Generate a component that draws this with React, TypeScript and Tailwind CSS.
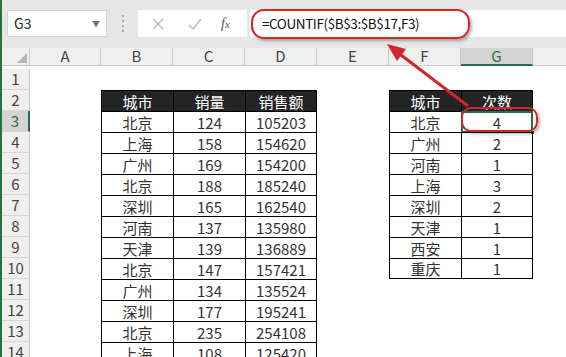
import React from 'react';

const COLS = ['A', 'B', 'C', 'D', 'E', 'F', 'G', 'H'];

const sales: [string, number, number][] = [
  ['北京', 124, 105203],
  ['上海', 158, 154620],
  ['广州', 169, 154200],
  ['北京', 188, 185240],
  ['深圳', 165, 162540],
  ['河南', 137, 135980],
  ['天津', 139, 136889],
  ['北京', 147, 157421],
  ['广州', 134, 135524],
  ['深圳', 177, 195241],
  ['北京', 235, 254108],
  ['上海', 108, 125420],
];

const counts: [string, number][] = [
  ['北京', 4],
  ['广州', 2],
  ['河南', 1],
  ['上海', 3],
  ['深圳', 2],
  ['天津', 1],
  ['西安', 1],
  ['重庆', 1],
];

function cellContent(row: number, col: number): { text: string; head?: boolean; border?: string } | null {
  // table 1: B2:D14
  if (col >= 1 && col <= 3 && row >= 2) {
    let border = 'border-l border-t border-black';
    if (col === 3) border += ' border-r';
    if (row === 2) {
      return { text: ['城市', '销量', '销售额'][col - 1], head: true, border };
    }
    const d = sales[row - 3];
    return { text: d ? String(d[col - 1]) : '', border };
  }
  // table 2: F2:G10
  if (col >= 5 && col <= 6 && row >= 2 && row <= 10) {
    let border = 'border-l border-t border-black';
    if (col === 6) border += ' border-r';
    if (row === 10) border += ' border-b';
    if (row === 2) return { text: col === 5 ? '城市' : '次数', head: true, border };
    const d = counts[row - 3];
    return { text: String(d[col - 5]), border };
  }
  return null;
}

export default function App() {
  const rows = Array.from({ length: 14 }, (_, i) => i + 1);

  return (
    <div className="relative w-[566px] h-[357px] overflow-hidden bg-white border-l-2 border-[#217346] font-['Noto_Sans_CJK_SC',sans-serif]">
      {/* formula bar */}
      <div className="h-[48px] bg-[#e6e6e6] flex items-start pt-[10px] pl-[5px]">
        <div className="w-[100px] h-[27px] bg-white border border-[#d6d6d6] flex items-center justify-between pl-[6px] pr-[6px]">
          <span className="text-[14px] text-[#222]">G3</span>
          <span className="text-[8px] text-[#777]">▼</span>
        </div>
        <div className="w-[31px] h-[27px] flex flex-col items-center justify-center gap-[3px]">
          <span className="w-[2px] h-[2px] bg-[#a8a8a8]" />
          <span className="w-[2px] h-[2px] bg-[#a8a8a8]" />
          <span className="w-[2px] h-[2px] bg-[#a8a8a8]" />
          <span className="w-[2px] h-[2px] bg-[#a8a8a8]" />
        </div>
        <div className="w-[109px] h-[27px] bg-white flex items-center">
          <svg width="14" height="14" viewBox="0 0 14 14" className="ml-[13px]">
            <path d="M2 2 L12 12 M12 2 L2 12" stroke="#b8b8b8" strokeWidth="1.4" />
          </svg>
          <svg width="16" height="14" viewBox="0 0 16 14" className="ml-[22px]">
            <path d="M2 8 L6 12 L14 2" stroke="#b8b8b8" strokeWidth="1.4" fill="none" />
          </svg>
          <span className="ml-[18px] text-[14px] italic text-[#555] font-['Liberation_Serif',serif]">
            f<span className="text-[11px]">x</span>
          </span>
        </div>
        <div className="ml-[3px] flex-1 h-[27px] bg-white flex items-center pl-[12px]">
          <span className="text-[13.5px] tracking-[-0.4px] text-[#111]">=COUNTIF($B$3:$B$17,F3)</span>
        </div>
      </div>

      {/* sheet grid */}
      <div className="grid grid-cols-[28px_71px_72px_72px_72px_72px_72px_72px_40px] auto-rows-[21px] text-[#333]">
        {/* header row */}
        <div className="h-[18px] bg-[#efefef] border-r border-b border-[#c9c9c9] flex items-end justify-end pr-[2px] pb-[2px]">
          <svg width="10" height="10" viewBox="0 0 10 10">
            <path d="M10 0 L10 10 L0 10 Z" fill="#b4b4b4" />
          </svg>
        </div>
        {COLS.map((c) => (
          <div
            key={c}
            className={
              'h-[18px] flex items-center justify-center text-[15px] ' +
              (c === 'G'
                ? 'bg-[#d4d4d4] border-r border-[#c9c9c9] border-b-2 border-b-[#217346] text-[#217346]'
                : 'bg-[#efefef] border-r border-b border-[#c9c9c9] text-[#444]')
            }
          >
            {c === 'H' ? '' : c}
          </div>
        ))}

        {rows.map((r) => (
          <React.Fragment key={r}>
            <div
              className={
                'flex items-center justify-center text-[15px] border-b border-[#d6d6d6] ' +
                (r === 3
                  ? 'bg-[#d4d4d4] border-r-2 border-r-[#217346] text-[#217346]'
                  : 'bg-[#efefef] border-r border-r-[#c9c9c9] text-[#444]')
              }
            >
              {r}
            </div>
            {COLS.map((_, ci) => {
              const c = cellContent(r, ci);
              const selected = r === 3 && ci === 6;
              return (
                <div
                  key={ci}
                  className={
                    'relative flex items-center justify-center text-[15px] leading-none ' +
                    (c?.border ?? '') +
                    (c?.head ? ' bg-[#242424] text-white' : ' text-[#333]')
                  }
                >
                  {c?.text}
                  {selected && (
                    <>
                      <div className="absolute -left-px -top-px -right-px -bottom-px border-2 border-[#217346]" />
                      <div className="absolute -right-[3px] -bottom-[3px] w-[5px] h-[5px] bg-[#217346] border border-white" />
                    </>
                  )}
                </div>
              );
            })}
          </React.Fragment>
        ))}
      </div>

      {/* annotations */}
      <div className="absolute left-[249px] top-[9px] w-[219px] h-[30px] rounded-[13px] border-2 border-[#d3262b] shadow-[2px_2px_3px_rgba(0,0,0,0.3)]" />
      <div className="absolute left-[459px] top-[107px] w-[77px] h-[25px] rounded-[10px] border-2 border-[#d3262b] shadow-[2px_2px_3px_rgba(0,0,0,0.3)]" />
      <svg className="absolute left-0 top-0 pointer-events-none" width="566" height="357" viewBox="0 0 566 357">
        <line x1="466" y1="106" x2="399" y2="55" stroke="#d3262b" strokeWidth="3" />
        <polygon points="385,44 404,49 395,61" fill="#d3262b" />
      </svg>
    </div>
  );
}
